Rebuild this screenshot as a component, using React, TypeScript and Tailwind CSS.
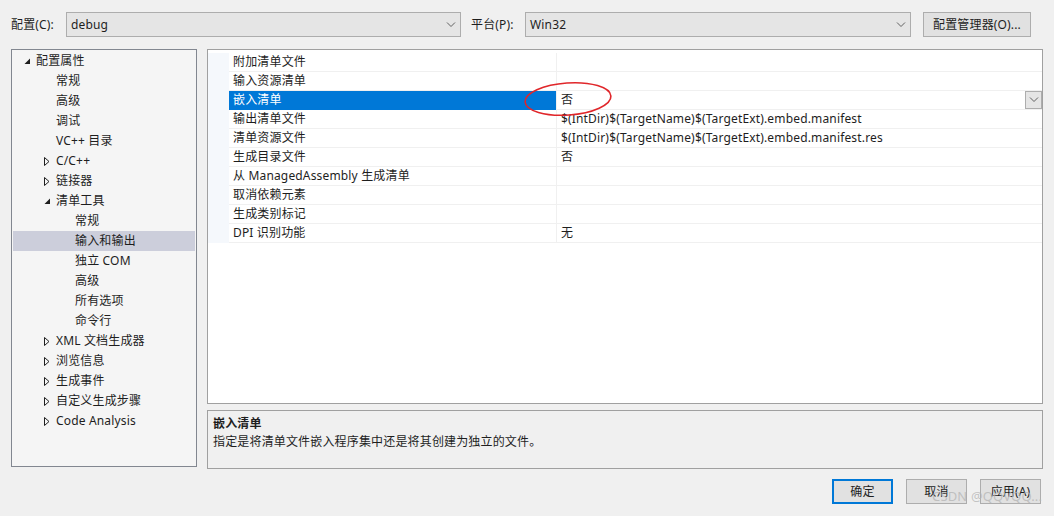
import React from "react";

type TreeItem = { label: string; level: 0 | 1 | 2; arrow?: "open" | "closed"; selected?: boolean };

const tree: TreeItem[] = [
  { label: "配置属性", level: 0, arrow: "open" },
  { label: "常规", level: 1 },
  { label: "高级", level: 1 },
  { label: "调试", level: 1 },
  { label: "VC++ 目录", level: 1 },
  { label: "C/C++", level: 1, arrow: "closed" },
  { label: "链接器", level: 1, arrow: "closed" },
  { label: "清单工具", level: 1, arrow: "open" },
  { label: "常规", level: 2 },
  { label: "输入和输出", level: 2, selected: true },
  { label: "独立 COM", level: 2 },
  { label: "高级", level: 2 },
  { label: "所有选项", level: 2 },
  { label: "命令行", level: 2 },
  { label: "XML 文档生成器", level: 1, arrow: "closed" },
  { label: "浏览信息", level: 1, arrow: "closed" },
  { label: "生成事件", level: 1, arrow: "closed" },
  { label: "自定义生成步骤", level: 1, arrow: "closed" },
  { label: "Code Analysis", level: 1, arrow: "closed" },
];

const props: { name: string; value: string; selected?: boolean }[] = [
  { name: "附加清单文件", value: "" },
  { name: "输入资源清单", value: "" },
  { name: "嵌入清单", value: "否", selected: true },
  { name: "输出清单文件", value: "$(IntDir)$(TargetName)$(TargetExt).embed.manifest" },
  { name: "清单资源文件", value: "$(IntDir)$(TargetName)$(TargetExt).embed.manifest.res" },
  { name: "生成目录文件", value: "否" },
  { name: "从 ManagedAssembly 生成清单", value: "" },
  { name: "取消依赖元素", value: "" },
  { name: "生成类别标记", value: "" },
  { name: "DPI 识别功能", value: "无" },
];

function Chevron() {
  return (
    <svg width="10" height="6" viewBox="0 0 10 6" fill="none" stroke="#606060" strokeWidth="1">
      <polyline points="1,0.5 5,4.5 9,0.5" />
    </svg>
  );
}

function Arrow({ kind }: { kind: "open" | "closed" }) {
  if (kind === "open") {
    return (
      <svg width="7" height="7" viewBox="0 0 7 7">
        <polygon points="6,0.5 6,6 0.5,6" fill="#1e1e1e" />
      </svg>
    );
  }
  return (
    <svg width="6" height="9" viewBox="0 0 6 9" fill="none" stroke="#1e1e1e" strokeWidth="1">
      <polygon points="0.5,0.5 5,4.5 0.5,8.5" />
    </svg>
  );
}

function Combo({ value, width }: { value: string; width: string }) {
  return (
    <div className={`flex h-[25px] items-center justify-between border border-[#adadad] bg-[#e5e5e5] pl-[4px] pr-[4px] ${width}`}>
      <span>{value}</span>
      <Chevron />
    </div>
  );
}

function Button({ label, primary }: { label: string; primary?: boolean }) {
  return (
    <div
      className={[
        "flex h-[25px] w-[61px] items-center justify-center bg-[#e1e1e1]",
        primary ? "border-2 border-[#0078d7]" : "border border-[#adadad]",
      ].join(" ")}
    >
      {label}
    </div>
  );
}

export default function App() {
  return (
    <div
      className="relative h-[516px] w-[1054px] overflow-hidden bg-[#f0f0f0] text-[12px] leading-none tracking-[0.16px] text-[#1e1e1e]"
      style={{ fontFamily: '"Noto Sans", "Noto Sans CJK SC", sans-serif' }}
    >
      {/* Top bar */}
      <div className="flex items-center pl-[11px] pt-[12px]">
        <span className="w-[55px]">配置(C):</span>
        <Combo value="debug" width="w-[395px]" />
        <span className="ml-[10px] w-[54px]">平台(P):</span>
        <Combo value="Win32" width="w-[386px]" />
        <div className="ml-[12px] flex h-[25px] w-[108px] items-center justify-center border border-[#adadad] bg-[#e1e1e1]">
          配置管理器(O)...
        </div>
      </div>

      <div className="mt-[12px] flex gap-[10px] pl-[11px]">
        {/* Tree */}
        <div className="h-[418px] w-[186px] border border-[#828790] bg-[#f5f5f5] pt-[1px]">
          {tree.map((item, i) => (
            <div
              key={i}
              className={[
                "mx-[1px] flex h-[20px] items-center",
                item.selected ? "bg-[#cccedb]" : "",
              ].join(" ")}
            >
              <div
                className={[
                  "flex w-[14px] shrink-0 items-center justify-center",
                  item.level === 0 ? "ml-[7px]" : item.level === 1 ? "ml-[27px]" : "ml-[46px]",
                ].join(" ")}
              >
                {item.arrow && <Arrow kind={item.arrow} />}
              </div>
              <span className="ml-[2px] whitespace-nowrap">{item.label}</span>
            </div>
          ))}
        </div>

        {/* Right side */}
        <div className="flex w-[836px] flex-col">
          <div className="relative h-[355px] border border-[#a0a0a0] bg-white pt-[3px]">
            {props.map((p, i) => (
              <div key={i} className="flex h-[19px]">
                <div className="w-[21px] shrink-0 bg-[#f5f8fc]" />
                <div
                  className={[
                    "flex w-[327px] shrink-0 items-center border-b pl-[4px]",
                    p.selected ? "border-[#0078d7] bg-[#0078d7] text-white" : "border-[#f0f0f0]",
                  ].join(" ")}
                >
                  {p.name}
                </div>
                <div className="flex flex-1 items-center justify-between border-b border-l border-[#f0f0f0] pl-[4px]">
                  <span className="whitespace-nowrap">{p.value}</span>
                  {p.selected && (
                    <div className="flex h-[18px] w-[17px] items-center justify-center border border-[#adadad] bg-[#e5e5e5]">
                      <Chevron />
                    </div>
                  )}
                </div>
              </div>
            ))}
          </div>

          <div className="mt-[6px] h-[59px] border border-[#a0a0a0] bg-[#f0f0f0] pl-[5px] pt-[7px]">
            <div className="font-bold">嵌入清单</div>
            <div className="mt-[6px]">指定是将清单文件嵌入程序集中还是将其创建为独立的文件。</div>
          </div>
        </div>
      </div>

      {/* Buttons */}
      <div className="mt-[10px] flex justify-end gap-[13px] pr-[13px]">
        <Button label="确定" primary />
        <Button label="取消" />
        <Button label="应用(A)" />
      </div>

      {/* Red annotation ellipse */}
      <svg className="absolute left-[521px] top-[78px]" width="94" height="42" viewBox="0 0 94 42" fill="none">
        <ellipse cx="47" cy="21" rx="43" ry="16" stroke="#e0262a" strokeWidth="1.6" transform="rotate(-4 47 21)" />
      </svg>

      {/* Watermark */}
      <div className="pointer-events-none absolute left-[932px] top-[490px] whitespace-nowrap text-[13px] text-[#b4b4b4]/75">
        CSDN @QQVQQ...
      </div>
    </div>
  );
}
